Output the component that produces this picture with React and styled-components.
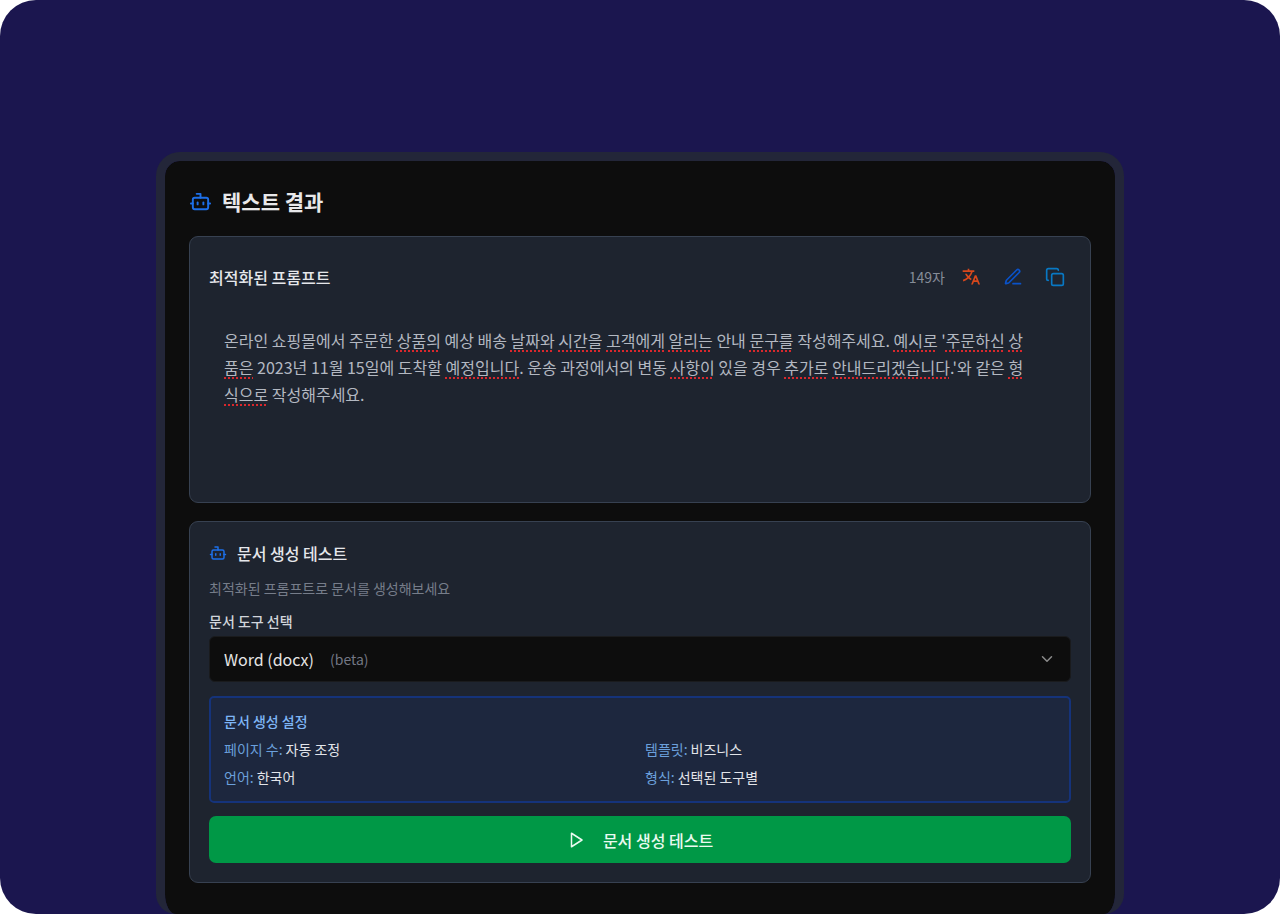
import React, { useState } from 'react';
import styled, { createGlobalStyle } from 'styled-components';
import { Bot, ChevronDown, Copy } from 'lucide-react';
import { RiTranslate2 } from 'react-icons/ri';

const GlobalStyle = createGlobalStyle`
  * {
    box-sizing: border-box;
  }
  body {
    margin: 0;
    background: #ffffff;
    font-family: 'Noto Sans CJK KR', 'Noto Sans', sans-serif;
    color: #e5e7eb;
  }
  h1, h2, p, dl, dd {
    margin: 0;
  }
`;

const Stage = styled.main`
  display: flex;
  flex-direction: column;
  align-items: center;
  min-height: 100vh;
  padding: 152px 24px 0;
  background: #1b164f;
  border-radius: 36px;
`;

const Panel = styled.section`
  display: flex;
  flex-direction: column;
  flex: 1;
  width: 100%;
  max-width: 968px;
  padding: 27px 24px 30px;
  background: #0d0d0d;
  background-clip: padding-box;
  border: 9px solid #232639;
  border-bottom-width: 0;
  border-radius: 24px 24px 20px 20px;
`;

const Title = styled.h1`
  display: flex;
  align-items: center;
  gap: 10px;
  margin-bottom: 21px;
  font-size: 21px;
  font-weight: 600;
  line-height: 27px;
  color: #e8e8ea;
`;

const Card = styled.section`
  display: flex;
  flex-direction: column;
  padding: 18px 19px 19px;
  background: #1e242f;
  border: 1px solid #374151;
  border-radius: 9px;
  & + & {
    margin-top: 18px;
  }
`;

const CardHeader = styled.header`
  display: flex;
  align-items: center;
  justify-content: space-between;
  height: 43px;
`;

const CardTitle = styled.h2`
  display: flex;
  align-items: center;
  gap: 10px;
  font-size: 16px;
  font-weight: 500;
  line-height: 26px;
  color: #e5e7eb;
`;

const Tools = styled.div`
  display: flex;
  align-items: center;
  gap: 10px;
`;

const Count = styled.span`
  font-size: 14px;
  line-height: 20px;
  color: #868c98;
`;

const IconButton = styled.button`
  display: flex;
  align-items: center;
  justify-content: center;
  width: 32px;
  height: 34px;
  padding: 0;
  background: transparent;
  border: 0;
  color: ${({ $color }) => $color};
  cursor: pointer;
`;

const PromptBox = styled.div`
  min-height: 171px;
  margin-top: 14px;
  padding: 15px 40px 15px 15px;
  font-size: 16px;
  line-height: 27px;
  color: #b3b8c1;
  word-break: break-all;
  outline: none;
`;

const Word = styled.span`
  line-height: 27px;
`;

const Misspelled = styled(Word)`
  text-decoration: underline dotted #d9282d 2px;
  text-underline-offset: 3px;
  text-decoration-skip-ink: none;
`;

const Hint = styled.p`
  margin-top: 12px;
  font-size: 14px;
  line-height: 20px;
  color: #767d8a;
`;

const Label = styled.label`
  margin-top: 13px;
  font-size: 14px;
  font-weight: 500;
  line-height: 20px;
  color: #d1d5db;
`;

const SelectBox = styled.div`
  display: grid;
  align-items: center;
  height: 46px;
  margin-top: 5px;
  background: #0d0d0d;
  border: 1px solid #1a1b1d;
  border-radius: 6px;
  > * {
    grid-area: 1 / 1;
  }
  svg {
    justify-self: end;
    margin-right: 14px;
    color: #8b8b8b;
    pointer-events: none;
  }
`;

const Select = styled.select`
  appearance: none;
  width: 100%;
  height: 100%;
  padding: 0 14px;
  background: transparent;
  border: 0;
  font: inherit;
  font-size: 16px;
  color: #e5e5e5;
`;

const Beta = styled.span`
  justify-self: start;
  margin-left: 120px;
  font-size: 14px;
  line-height: 20px;
  color: #737784;
  pointer-events: none;
`;

const Settings = styled.section`
  margin-top: 14px;
  padding: 13px 13px 14px;
  background: #1d273e;
  border: 2px solid #15337a;
  border-radius: 5px;
  font-size: 14px;
  line-height: 20px;
`;

const SettingsTitle = styled.h2`
  font-size: 14px;
  font-weight: 500;
  line-height: 20px;
  color: #7db5f5;
`;

const SettingsGrid = styled.dl`
  display: grid;
  grid-template-columns: 1fr 1fr;
  gap: 8px 10px;
  margin-top: 8px;
`;

const Setting = styled.div`
  display: flex;
  gap: 3px;
  dt {
    color: #6ba0dc;
  }
  dd {
    color: #e2e4e9;
  }
`;

const RunButton = styled.button`
  display: flex;
  align-items: center;
  justify-content: center;
  gap: 18px;
  height: 47px;
  margin-top: 13px;
  padding: 0;
  background: #009846;
  border: 0;
  border-radius: 7px;
  font: inherit;
  font-size: 16px;
  font-weight: 500;
  color: #eafaf0;
  cursor: pointer;
`;

const settings = [
  { name: '페이지 수', value: '자동 조정' },
  { name: '템플릿', value: '비즈니스' },
  { name: '언어', value: '한국어' },
  { name: '형식', value: '선택된 도구별' },
];

// words between asterisks get the spelling underline
const prompt =
  "온라인 쇼핑몰에서 주문한 *상품의* 예상 배송 *날짜와* *시간을* *고객에게* *알리는* 안내 *문구를* 작성해주세요. *예시로* '*주문하신* *상**품은* 2023년 11월 15일에 도착할 *예정입니다*. 운송 과정에서의 변동 *사항이* 있을 경우 *추가로* *안내드리겠습니다*.'와 같은 *형**식으로* 작성해주세요.";

const StrokeIcon = ({ size, children }) => (
  <svg
    width={size}
    height={size}
    viewBox="0 0 24 24"
    fill="none"
    stroke="currentColor"
    strokeWidth="2"
    strokeLinecap="round"
    strokeLinejoin="round"
    aria-hidden="true"
  >
    {children}
  </svg>
);

const PenIcon = () => (
  <StrokeIcon size={20}>
    <path d="M12 20h9" />
    <path d="M16.376 3.622a1 1 0 0 1 3.002 3.002L7.368 18.635a2 2 0 0 1-.855.506l-2.872.838a.5.5 0 0 1-.62-.62l.838-2.872a2 2 0 0 1 .506-.854z" />
  </StrokeIcon>
);

const PlayIcon = () => (
  <StrokeIcon size={18}>
    <polygon points="6 3 20 12 6 21 6 3" />
  </StrokeIcon>
);

const PromptText = () =>
  prompt.split('*').map((part, i) => {
    if (i % 2) {
      return <Misspelled key={i}>{part}</Misspelled>;
    }
    return part
      .split(/( )/)
      .map((word, j) => (word.trim() ? <Word key={`${i}-${j}`}>{word}</Word> : word));
  });

const App = () => {
  const [tool, setTool] = useState('docx');

  return (
    <>
      <GlobalStyle />
      <Stage>
        <Panel>
          <Title>
            <Bot size={23} color="#1d6fe8" />
            텍스트 결과
          </Title>
          <Card>
            <CardHeader>
              <CardTitle>최적화된 프롬프트</CardTitle>
              <Tools>
                <Count>149자</Count>
                <IconButton type="button" aria-label="번역" $color="#d9481c">
                  <RiTranslate2 size={20} />
                </IconButton>
                <IconButton type="button" aria-label="편집" $color="#0a52c8">
                  <PenIcon />
                </IconButton>
                <IconButton type="button" aria-label="복사" $color="#0878c4">
                  <Copy size={20} />
                </IconButton>
              </Tools>
            </CardHeader>
            <PromptBox
              role="textbox"
              aria-multiline="true"
              aria-label="최적화된 프롬프트"
              contentEditable
              suppressContentEditableWarning
              spellCheck={false}
            >
              <PromptText />
            </PromptBox>
          </Card>
          <Card>
            <CardTitle>
              <Bot size={18} color="#1d6fe8" />
              문서 생성 테스트
            </CardTitle>
            <Hint>최적화된 프롬프트로 문서를 생성해보세요</Hint>
            <Label htmlFor="tool">문서 도구 선택</Label>
            <SelectBox>
              <Select id="tool" value={tool} onChange={(e) => setTool(e.target.value)}>
                <option value="docx">Word (docx)</option>
              </Select>
              <Beta>(beta)</Beta>
              <ChevronDown size={18} />
            </SelectBox>
            <Settings>
              <SettingsTitle>문서 생성 설정</SettingsTitle>
              <SettingsGrid>
                {settings.map(({ name, value }) => (
                  <Setting key={name}>
                    <dt>{name}:</dt>
                    <dd>{value}</dd>
                  </Setting>
                ))}
              </SettingsGrid>
            </Settings>
            <RunButton type="button">
              <PlayIcon />
              문서 생성 테스트
            </RunButton>
          </Card>
        </Panel>
      </Stage>
    </>
  );
};

export default App;
